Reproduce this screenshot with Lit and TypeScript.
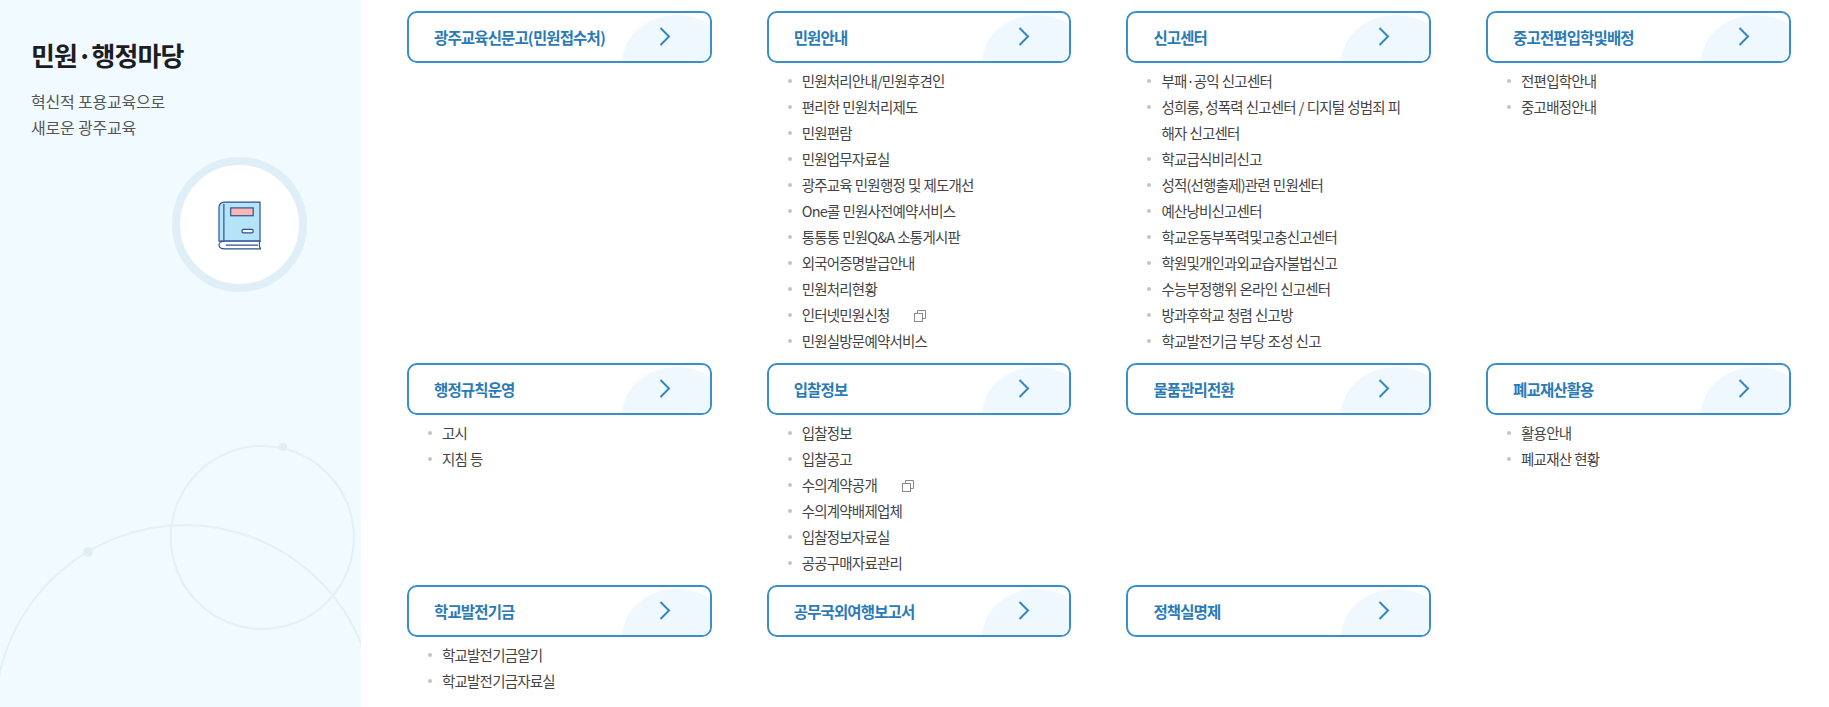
import { LitElement, html, css, svg } from "lit";
import { customElement } from "lit/decorators.js";

interface Item { t: string; ext?: boolean }
interface Sec { title: string; items: Item[] }
const i = (...a: string[]): Item[] => a.map((t) => ({ t }));

const rows: Sec[][] = [
  [
    { title: "광주교육신문고(민원접수처)", items: [] },
    { title: "민원안내", items: [
      ...i("민원처리안내/민원후견인", "편리한 민원처리제도", "민원편람", "민원업무자료실", "광주교육 민원행정 및 제도개선", "One콜 민원사전예약서비스", "통통통 민원Q&A 소통게시판", "외국어증명발급안내", "민원처리현황"),
      { t: "인터넷민원신청", ext: true },
      { t: "민원실방문예약서비스" },
    ] },
    { title: "신고센터", items: i("부패·공익 신고센터", "성희롱, 성폭력 신고센터 / 디지털 성범죄 피해자 신고센터", "학교급식비리신고", "성적(선행출제)관련 민원센터", "예산낭비신고센터", "학교운동부폭력및고충신고센터", "학원및개인과외교습자불법신고", "수능부정행위 온라인 신고센터", "방과후학교 청렴 신고방", "학교발전기금 부당 조성 신고") },
    { title: "중고전편입학및배정", items: i("전편입학안내", "중고배정안내") },
  ],
  [
    { title: "행정규칙운영", items: i("고시", "지침 등") },
    { title: "입찰정보", items: [
      ...i("입찰정보", "입찰공고"),
      { t: "수의계약공개", ext: true },
      ...i("수의계약배제업체", "입찰정보자료실", "공공구매자료관리"),
    ] },
    { title: "물품관리전환", items: [] },
    { title: "폐교재산활용", items: i("활용안내", "폐교재산 현황") },
  ],
  [
    { title: "학교발전기금", items: i("학교발전기금알기", "학교발전기금자료실") },
    { title: "공무국외여행보고서", items: [] },
    { title: "정책실명제", items: [] },
  ],
];

const chevron = svg`<path d="M1.5 1 L10 9.5 L1.5 18" fill="none" stroke="#2f86c1" stroke-width="2"/>`;
const extIcon = svg`<rect x="0.5" y="3.5" width="8" height="8" fill="#fff" stroke="#8a8a8a"/><path d="M3.5 3.5 V0.5 H11.5 V8.5 H8.5" fill="none" stroke="#8a8a8a"/>`;

@customElement("app-root")
export class AppRoot extends LitElement {
  static styles = css`
    :host {
      display: block;
      width: 1829px;
      height: 707px;
      overflow: hidden;
      background: #fff;
      font-family: "Noto Sans CJK KR", "Noto Sans", sans-serif;
    }
    .page { display: flex; height: 707px; }
    .side {
      position: relative;
      flex: 0 0 361px;
      background: #f0faff;
      padding: 36px 0 0 31px;
      box-sizing: border-box;
      overflow: hidden;
    }
    .side h2 {
      margin: 0;
      font-size: 26px;
      line-height: 38px;
      font-weight: 700;
      letter-spacing: -0.9px;
      color: #1d1d1f;
    }
    .side p {
      margin: 14px 0 0;
      font-size: 16px;
      line-height: 26px;
      color: #555;
      letter-spacing: -0.2px;
    }
    .badge {
      width: 119px;
      height: 119px;
      margin: 17px 0 0 141px;
      border: 8px solid #e0eef7;
      border-radius: 50%;
      background: #fff;
      display: flex;
      align-items: center;
      justify-content: center;
    }
    .book { margin-top: 2px; }
    .deco { position: absolute; left: 0; top: 420px; }
    .main {
      flex: 1;
      padding: 11px 0 0 46px;
      display: flex;
      flex-direction: column;
    }
    .row { display: grid; grid-template-columns: repeat(4, 304.6px); column-gap: 55.1px; }
    .r0 { height: 352px; }
    .r1 { height: 222px; }
    .card {
      position: relative;
      display: flex;
      align-items: center;
      justify-content: space-between;
      box-sizing: border-box;
      height: 52px;
      border: 2px solid #3a8fc6;
      border-radius: 10px;
      padding: 0 39px 0 25px;
      overflow: hidden;
      background: #fff;
      color: #2a7ab8;
      font-size: 15.5px;
      font-weight: 700;
      letter-spacing: -0.85px;
    }
    .card::before {
      content: "";
      position: absolute;
      left: 213px;
      top: 2px;
      width: 110px;
      height: 96px;
      border-radius: 50%;
      background: #eff8ff;
    }
    .card span, .card svg { position: relative; }
    ul {
      list-style: none;
      margin: 5px 0 0;
      padding: 0 25px 0 35px;
      word-break: break-all;
    }
    li {
      position: relative;
      font-size: 14.5px;
      line-height: 26px;
      color: #444;
      letter-spacing: -0.8px;
      word-spacing: 0.5px;
    }
    li::before {
      content: "";
      position: absolute;
      left: -14px;
      top: 11px;
      width: 4px;
      height: 4px;
      border-radius: 50%;
      background: #c4c4c4;
    }
    .ext { display: inline-block; vertical-align: -1px; margin-left: 25px; }
  `;

  render() {
    return html`
      <div class="page">
        <aside class="side">
          <h2>민원·행정마당</h2>
          <p>혁신적 포용교육으로<br />새로운 광주교육</p>
          <div class="badge">
            <svg class="book" width="43" height="49" viewBox="0 0 44 50">
              <path d="M7 1 H43 V41 H1 V7 Q1 1 7 1 Z" fill="#b5e3f8" stroke="#2c4f92" stroke-width="1.2"/>
              <path d="M6 3 V40" stroke="#2c4f92" stroke-width="1.2" fill="none"/>
              <rect x="13" y="7" width="23" height="8" fill="#fdb6b4" stroke="#2c4f92" stroke-width="1.2"/>
              <rect x="24.5" y="29" width="11.5" height="3.5" rx="1.7" fill="#fff" stroke="#2c4f92" stroke-width="1.2"/>
              <path d="M43 41 H7 Q1 41 1 45 Q1 49 7 49 H43.5 Q41.5 45 43 41 Z" fill="#fff" stroke="#2c4f92" stroke-width="1.2"/>
              <path d="M8 45 H41" stroke="#2c4f92" stroke-width="1.2" fill="none"/>
            </svg>
          </div>
          <svg class="deco" width="361" height="287" viewBox="0 0 361 287">
            <g fill="none" stroke="#e2f0f8" stroke-width="2">
              <circle cx="262.3" cy="117.4" r="91.5"/>
              <circle cx="185" cy="295" r="190"/>
            </g>
            <circle cx="283" cy="27" r="4" fill="#e0eef6"/>
            <circle cx="88" cy="132" r="5" fill="#e0eef6"/>
          </svg>
        </aside>
        <main class="main">
          ${rows.map((row, idx) => html`
            <div class="row r${idx}">
              ${row.map((s) => html`
                <section>
                  <a class="card"><span>${s.title}</span><svg width="12" height="20" viewBox="0 0 12 20">${chevron}</svg></a>
                  ${s.items.length ? html`<ul>${s.items.map((it) => html`<li>${it.t}${it.ext ? html`<svg class="ext" width="12" height="12" viewBox="0 0 12 12">${extIcon}</svg>` : ""}</li>`)}</ul>` : ""}
                </section>
              `)}
            </div>
          `)}
        </main>
      </div>
    `;
  }
}
